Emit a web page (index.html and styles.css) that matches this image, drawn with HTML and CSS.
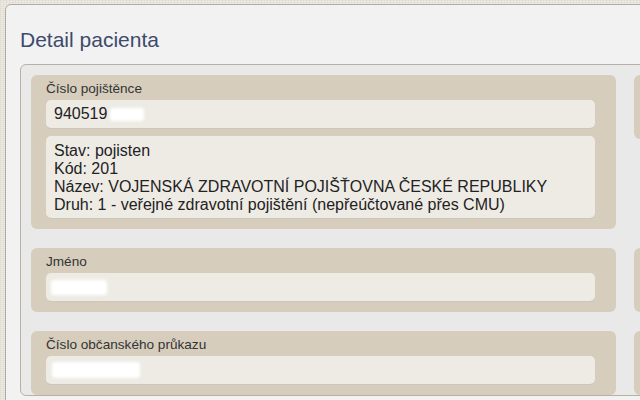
FILE: index.html
```html
<!DOCTYPE html>
<html lang="cs">
<head>
<meta charset="utf-8">
<title>Detail pacienta</title>
<link rel="stylesheet" href="styles.css">
</head>
<body>
<div class="page">
  <h1 class="title">Detail pacienta</h1>
  <div class="panel">
    <div class="card">
      <div class="label">Číslo pojištěnce</div>
      <div class="field">940519<span class="blur b1"></span></div>
      <div class="info">
        <div>Stav: pojisten</div>
        <div>Kód: 201</div>
        <div>Název: VOJENSKÁ ZDRAVOTNÍ POJIŠŤOVNA ČESKÉ REPUBLIKY</div>
        <div>Druh: 1 - veřejné zdravotní pojištění (nepřeúčtované přes CMU)</div>
      </div>
    </div>
    <div class="card">
      <div class="label">&nbsp;</div>
      <div class="field"></div>
    </div>
    <div class="card">
      <div class="label">Jméno</div>
      <div class="field"><span class="blur b2"></span></div>
    </div>
    <div class="card">
      <div class="label">&nbsp;</div>
      <div class="field"></div>
    </div>
    <div class="card">
      <div class="label">Číslo občanského průkazu</div>
      <div class="field"><span class="blur b3"></span></div>
    </div>
    <div class="card">
      <div class="label">&nbsp;</div>
      <div class="field"></div>
    </div>
  </div>
</div>
</body>
</html>
```
FILE: styles.css
```css
html, body {
  margin: 0;
  padding: 0;
  height: 400px;
  overflow: hidden;
}
body {
  background-color: #e7e3da;
  background-image:
    repeating-linear-gradient(0deg, rgba(255,255,255,0.25) 0 1px, transparent 1px 2px),
    repeating-linear-gradient(90deg, rgba(0,0,0,0.04) 0 1px, transparent 1px 3px);
  font-family: "Liberation Sans", Arial, sans-serif;
  color: #333;
}
.page {
  margin: 4px 0 0 5px;
  width: 700px;
  height: 460px;
  background: #f2f2f2;
  border: 1px solid #b3aa9e;
  border-radius: 6px;
  padding: 23px 0 0 14px;
  box-sizing: border-box;
}
.title {
  margin: 0 0 12px 0;
  font-size: 21px;
  font-weight: normal;
  line-height: 24px;
  color: #3d4a6c;
}
.panel {
  background: #e9e9e9;
  border: 1px solid #b8b0a5;
  border-radius: 6px;
  padding: 10px 0 0 10px;
  display: grid;
  grid-template-columns: 585px 585px;
  column-gap: 18px;
  row-gap: 19px;
  align-items: start;
}
.card {
  background: #d6cdbd;
  border-radius: 6px;
  padding: 5px 21px 11px 15px;
}
.label {
  font-size: 13.6px;
  line-height: 17px;
  margin-bottom: 3px;
  color: #333;
}
.field {
  height: 28px;
  line-height: 28px;
  background: #eeebe5;
  border-radius: 5px;
  box-shadow: 0 1px 0 #cbc6bd;
  padding: 0 8px;
  font-size: 16px;
  color: #222;
  position: relative;
}
.info {
  margin-top: 8px;
  background: #eeebe5;
  border-radius: 5px;
  box-shadow: 0 1px 0 #cbc6bd;
  padding: 6px 8px 4px;
  font-size: 16px;
  line-height: 18px;
  color: #222;
}
.blur {
  position: absolute;
  background: #fff;
  filter: blur(1.5px);
  border-radius: 3px;
}
.b1 { left: 64px; top: 8px; width: 34px; height: 13px; }
.b2 { left: 5px; top: 7px; width: 56px; height: 15px; }
.b3 { left: 6px; top: 6px; width: 88px; height: 16px; }
```
